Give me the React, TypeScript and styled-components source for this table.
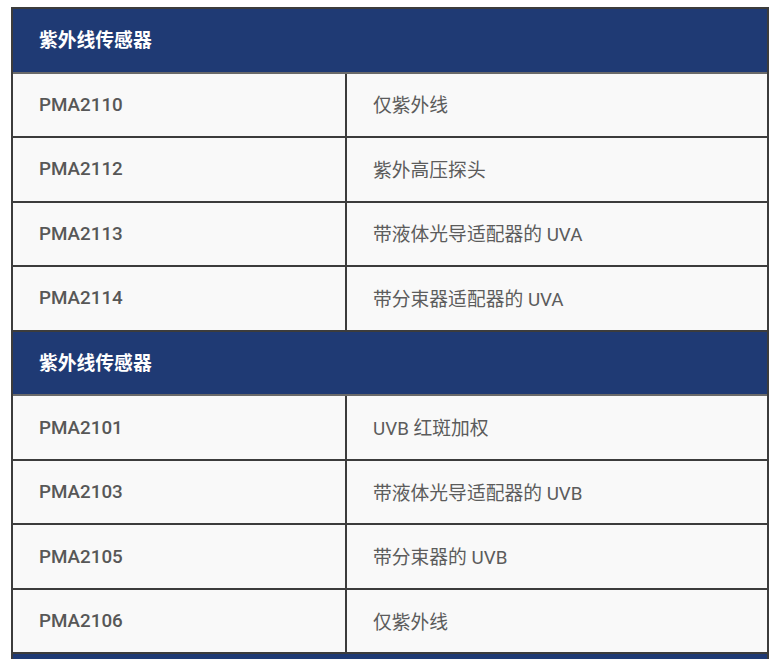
import styled, { createGlobalStyle } from 'styled-components';

const GlobalStyle = createGlobalStyle`
  html, body {
    margin: 0;
    padding: 0;
    background: #ffffff;
  }
  body {
    font-family: Roboto, "Noto Sans CJK SC", sans-serif;
  }
`;

interface Group {
  title: string;
  items: { model: string; desc: string }[];
}

const groups: Group[] = [
  {
    title: '紫外线传感器',
    items: [
      { model: 'PMA2110', desc: '仅紫外线' },
      { model: 'PMA2112', desc: '紫外高压探头' },
      { model: 'PMA2113', desc: '带液体光导适配器的 UVA' },
      { model: 'PMA2114', desc: '带分束器适配器的 UVA' },
    ],
  },
  {
    title: '紫外线传感器',
    items: [
      { model: 'PMA2101', desc: 'UVB 红斑加权' },
      { model: 'PMA2103', desc: '带液体光导适配器的 UVB' },
      { model: 'PMA2105', desc: '带分束器的 UVB' },
      { model: 'PMA2106', desc: '仅紫外线' },
    ],
  },
  // next section starts just below the fold; only its bar edge is visible
  { title: '', items: [] },
];

export default function App() {
  return (
    <>
      <GlobalStyle />
      <Page>
        <Table>
          {groups.map((group, gi) => (
            <div key={gi}>
              <HeaderRow>{group.title}</HeaderRow>
              {group.items.map(item => (
                <Row key={item.model}>
                  <ModelCell>{item.model}</ModelCell>
                  <DescCell>{item.desc}</DescCell>
                </Row>
              ))}
            </div>
          ))}
        </Table>
      </Page>
    </>
  );
}

const Page = styled.div`
  padding: 7px 0 0 11px;
`;

const Table = styled.div`
  width: 758px;
  box-sizing: border-box;
  border: 2px solid #3c3c3c;
  border-bottom: none;
`;

const HeaderRow = styled.div`
  display: flex;
  align-items: center;
  box-sizing: border-box;
  height: 64.56px;
  padding: 0 26px 3px;
  background: #1f3a74;
  border-bottom: 2px solid #6a6a6a;
  color: #ffffff;
  font-family: "Noto Sans CJK SC", sans-serif;
  font-weight: 700;
  font-size: 18.8px;
`;

const Row = styled.div`
  display: grid;
  grid-template-columns: 334px 1fr;
  height: 62.56px;
  background: #f9f9f9;
  border-bottom: 2px solid #3c3c3c;
`;

const Cell = styled.div`
  display: flex;
  align-items: center;
  padding: 0 26px;
  color: #575757;
  font-size: 18.8px;
`;

const ModelCell = styled(Cell)`
  font-family: Roboto, sans-serif;
  font-weight: 500;
  border-right: 2px solid #3c3c3c;
`;

const DescCell = styled(Cell)`
  font-family: Roboto, "Noto Sans CJK SC", sans-serif;
  font-weight: 400;
  color: #5c5c5c;
  padding-bottom: 2px;
`;
